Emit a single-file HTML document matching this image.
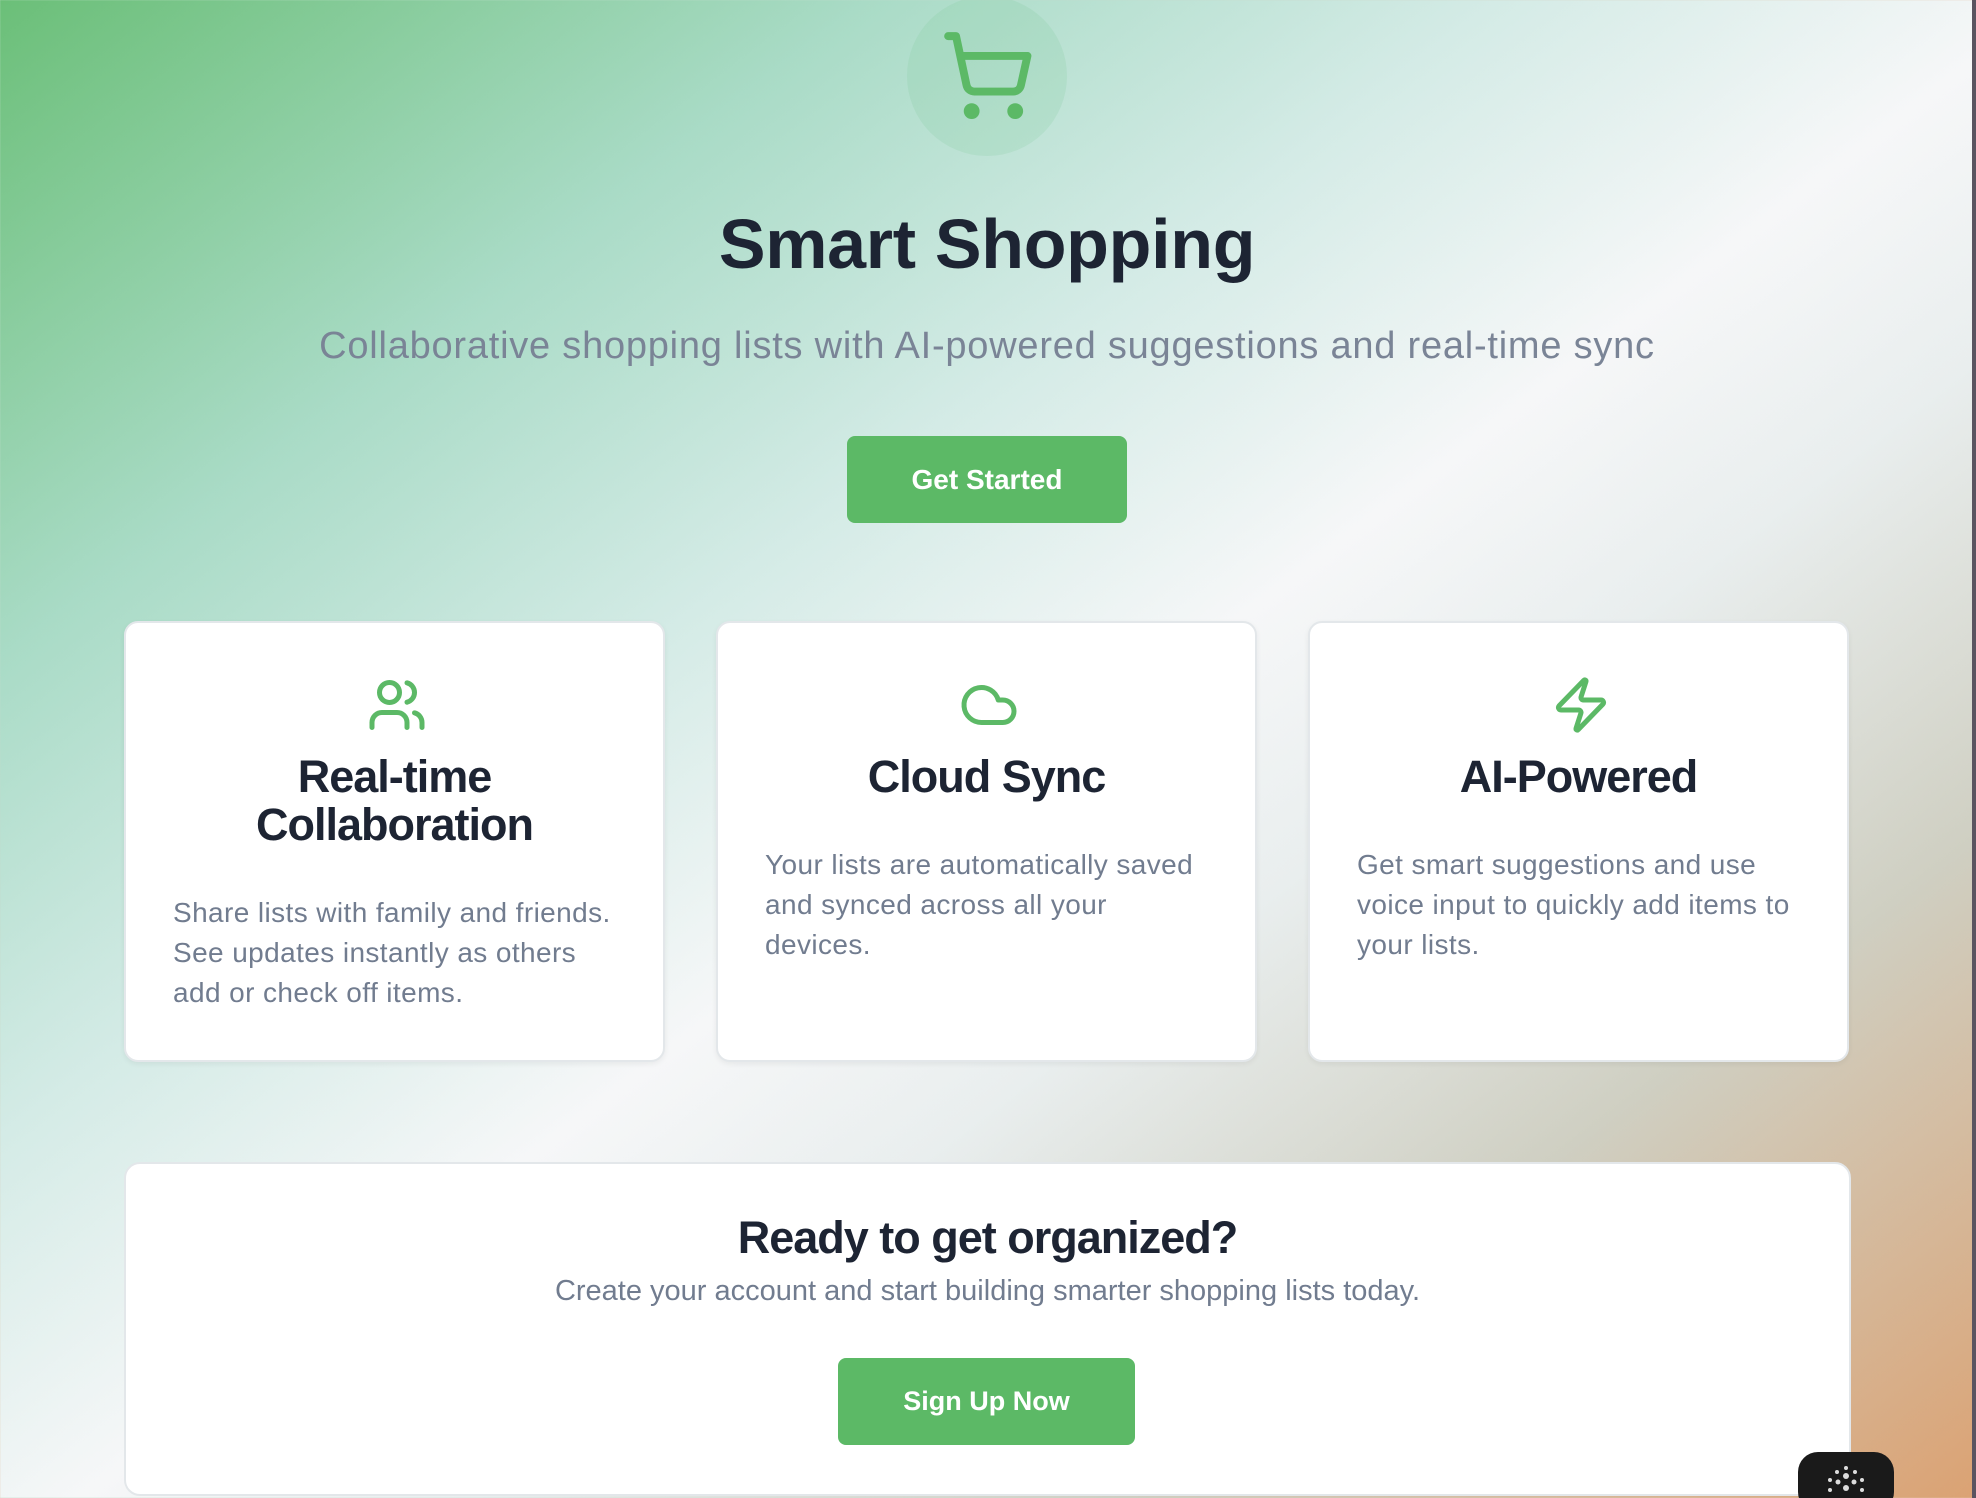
<!DOCTYPE html>
<html><head><meta charset="utf-8"><style>
*{margin:0;padding:0;box-sizing:border-box}
html,body{width:1976px;height:1498px;overflow:hidden}
body{font-family:"Liberation Sans",Arial,sans-serif;position:relative;
background:linear-gradient(to bottom right,#6bbf78 0%,#a9dbc6 22%,#d4ebe6 38%,#f6f7f8 52%,#e9eeee 62%,#cfcfc2 78%,#dba273 100%);}
.abs{position:absolute}
.circle{left:907px;top:-4px;width:160px;height:160px;border-radius:50%;background:rgba(120,200,150,0.18)}
h1{position:absolute;left:0;width:1974px;top:204px;text-align:center;font-size:70px;font-weight:700;color:#1d2433;letter-spacing:-0.3px}
.sub{position:absolute;left:0;width:1974px;top:325px;text-align:center;font-size:38px;letter-spacing:0.77px;color:#7a8496}
.btn{position:absolute;background:#5cb966;color:#fff;font-weight:700;font-size:28px;border-radius:8px;display:flex;align-items:center;justify-content:center}
.card{position:absolute;top:621px;width:541px;height:441px;background:#fff;border-radius:14px;border:2px solid #e3e7ea;box-shadow:0 2px 6px rgba(0,0,0,.06);text-align:center}
.card svg{position:absolute;left:241px;top:52px}
.card h3{position:absolute;left:0;width:100%;font-size:45px;font-weight:700;color:#1d2433;line-height:48px;letter-spacing:-1px}
.card p{position:absolute;left:47px;width:450px;text-align:left;font-size:28px;letter-spacing:0.4px;line-height:40px;color:#717c8f}
.bottom{position:absolute;left:124px;top:1162px;width:1727px;height:334px;background:#fff;border-radius:16px;border:2px solid #e3e7ea;text-align:center}
.bottom h2{position:absolute;left:0;width:100%;top:48px;font-size:45px;font-weight:700;color:#1d2433;letter-spacing:-1px}
.bottom p{position:absolute;left:0;width:100%;top:111px;font-size:29px;color:#717c8f}
.widget{left:1798px;top:1452px;width:96px;height:60px;border-radius:20px;background:#1a1a1a;overflow:hidden}
.edge{left:1972px;top:0;width:4px;height:1498px;background:#5a5460}
</style></head><body>
<div class="abs circle"></div>
<svg class="abs" style="left:940px;top:28px" width="95" height="95" viewBox="0 0 24 24" fill="none" stroke="#5cb966" stroke-width="2" stroke-linecap="round" stroke-linejoin="round"><circle cx="8" cy="21" r="1"/><circle cx="19" cy="21" r="1"/><path d="M2.05 2.05h2l2.66 12.42a2 2 0 0 0 2 1.58h9.78a2 2 0 0 0 1.950-1.57l1.65-7.43H5.12"/></svg>
<h1>Smart Shopping</h1>
<div class="sub">Collaborative shopping lists with AI-powered suggestions and real-time sync</div>
<div class="btn" style="left:847px;top:436px;width:280px;height:87px">Get Started</div>

<div class="card" style="left:124px">
<svg width="60" height="60" viewBox="0 0 24 24" fill="none" stroke="#5cb966" stroke-width="2" stroke-linecap="round" stroke-linejoin="round"><path d="M16 21v-2a4 4 0 0 0-4-4H6a4 4 0 0 0-4 4v2"/><circle cx="9" cy="7" r="4"/><path d="M22 21v-2a4 4 0 0 0-3-3.87"/><path d="M16 3.13a4 4 0 0 1 0 7.75"/></svg>
<h3 style="top:130px">Real-time<br>Collaboration</h3>
<p style="top:270px">Share lists with family and friends. See updates instantly as others add or check off items.</p>
</div>
<div class="card" style="left:716px">
<svg width="60" height="60" viewBox="0 0 24 24" fill="none" stroke="#5cb966" stroke-width="2" stroke-linecap="round" stroke-linejoin="round"><path d="M17.5 19H9a7 7 0 1 1 6.71-9h1.79a4.5 4.5 0 1 1 0 9Z"/></svg>
<h3 style="top:130px">Cloud Sync</h3>
<p style="top:222px;width:440px">Your lists are automatically saved and synced across all your devices.</p>
</div>
<div class="card" style="left:1308px">
<svg width="60" height="60" viewBox="0 0 24 24" fill="none" stroke="#5cb966" stroke-width="2" stroke-linecap="round" stroke-linejoin="round"><path d="M4 14a1 1 0 0 1-.78-1.630l9.9-10.2a.5.5 0 0 1 .86.46l-1.92 6.02A1 1 0 0 0 13 10h7a1 1 0 0 1 .78 1.63l-9.9 10.2a.5.5 0 0 1-.86-.46l1.92-6.02A1 1 0 0 0 11 14z"/></svg>
<h3 style="top:130px">AI-Powered</h3>
<p style="top:222px">Get smart suggestions and use voice input to quickly add items to your lists.</p>
</div>

<div class="bottom">
<h2>Ready to get organized?</h2>
<p>Create your account and start building smarter shopping lists today.</p>
</div>
<div class="btn" style="left:838px;top:1358px;width:297px;height:87px;font-size:27px">Sign Up Now</div>
<div class="abs widget">
<svg width="96" height="60" viewBox="0 0 96 60" fill="#ddd"><circle cx="48" cy="16" r="2"/><circle cx="39" cy="20" r="2"/><circle cx="57" cy="20" r="2"/><circle cx="48" cy="24" r="3"/><circle cx="32" cy="28" r="2"/><circle cx="64" cy="28" r="2"/><circle cx="40" cy="30" r="2.5"/><circle cx="56" cy="30" r="2.5"/><circle cx="48" cy="36" r="3"/><circle cx="32" cy="38" r="2"/><circle cx="64" cy="38" r="2"/></svg>
</div>
<div class="abs edge"></div>
</body></html>
